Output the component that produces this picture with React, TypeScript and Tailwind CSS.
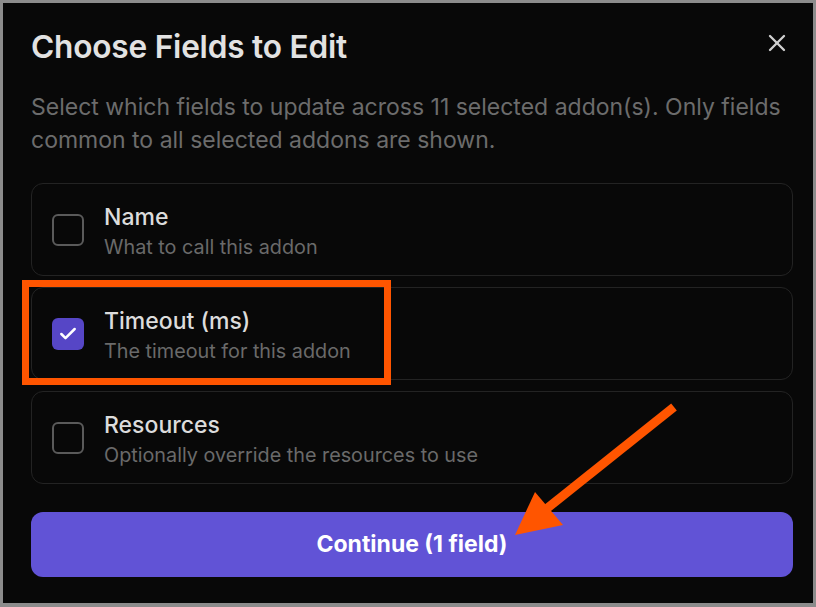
import { X, Check } from "lucide-react";

const fields = [
  { key: "name", label: "Name", hint: "What to call this addon", checked: false },
  { key: "timeout", label: "Timeout (ms)", hint: "The timeout for this addon", checked: true },
  { key: "resources", label: "Resources", hint: "Optionally override the resources to use", checked: false },
];

export default function App() {
  return (
    <div
      className="relative w-[816px] h-[607px] overflow-hidden border-[3px] border-b-4 border-[#8c8c8c] bg-[#080808] pl-[28px] pr-[20px] pt-[25px]"
      style={{ fontFamily: "Inter, 'Noto Sans', sans-serif" }}
    >
      <div className="flex items-start justify-between">
        <h1 className="text-[31.6px] leading-[38px] font-semibold text-[#e2e2e2] tracking-[-0.2px]">Choose Fields to Edit</h1>
        <button className="mt-[1px] mr-[2px] text-[#d0d0d0]">
          <X size={28} strokeWidth={2} />
        </button>
      </div>

      <p className="mt-[25px] text-[23px] leading-[33px] text-[#6c6c6c]">
        Select which fields to update across 11 selected addon(s). Only fields common to all selected addons are shown.
      </p>

      <div className="mt-[26px] flex flex-col gap-[11px]">
        {fields.map((f) => (
          <div key={f.key} className="flex h-[93px] items-center gap-[20px] rounded-[12px] border border-[#232323] pl-[20px]">
            {f.checked ? (
              <div className="flex h-[32px] w-[32px] items-center justify-center rounded-[6px] bg-[#5646c6] text-white">
                <Check size={20} strokeWidth={3} />
              </div>
            ) : (
              <div className="h-[32px] w-[32px] rounded-[6px] border-2 border-[#5a5a5a]" />
            )}
            <div className="flex flex-col pt-[4px]">
              <span className="text-[23px] leading-[31px] font-medium text-[#dcdcdc]">{f.label}</span>
              <span className="text-[19.8px] leading-[28px] text-[#6a6a6a]">{f.hint}</span>
            </div>
          </div>
        ))}
      </div>

      <button className="mt-[28px] flex h-[65px] w-full items-center justify-center rounded-[12px] bg-[#6153d6] text-[23px] font-bold text-white">
        Continue (1 field)
      </button>

      {/* annotation overlay */}
      <div className="pointer-events-none absolute left-[19px] top-[277px] h-[105px] w-[369px] border-[7px] border-[#ff5500]" />
      <svg className="pointer-events-none absolute left-[-3px] top-[-3px]" width="816" height="607" viewBox="0 0 816 607">
        <line x1="674" y1="407" x2="545" y2="510" stroke="#ff5500" strokeWidth="9" />
        <polygon points="515,535 535,492 563,525" fill="#ff5500" />
      </svg>
    </div>
  );
}
